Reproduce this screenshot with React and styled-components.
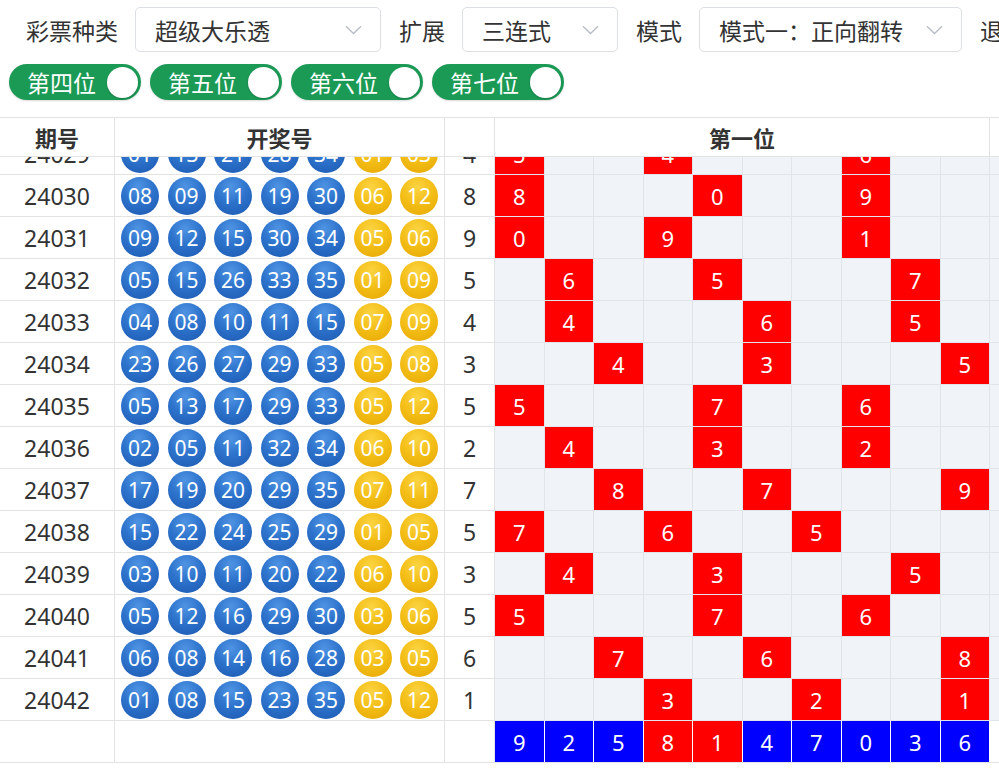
import React from 'react';
import styled, { createGlobalStyle } from 'styled-components';

const Global = createGlobalStyle`
  html, body { margin: 0; padding: 0; background: #fff; overflow: hidden; }
  body { font-family: "Noto Sans", "Noto Sans CJK SC", sans-serif; color: #333; }
  * { box-sizing: border-box; }
`;

const Page = styled.div`
  width: 1600px;
`;

const Toolbar = styled.div`
  display: flex;
  align-items: center;
  height: 45px;
  margin-top: 7px;
  padding-left: 26px;
  white-space: nowrap;
`;

const Label = styled.span`
  font-size: 23px;
  color: #333;
  margin-right: 17px;
`;

const SelectBox = styled.div`
  display: flex;
  align-items: center;
  justify-content: space-between;
  width: ${(p) => p.$w}px;
  height: 45px;
  border: 1px solid #dcdfe6;
  border-radius: 5px;
  padding: 0 18px 0 19px;
  font-size: 23px;
  color: #333;
  margin-right: 18px;
  background: #fff;
`;

const Chevron = () => (
  <svg width="17" height="10" viewBox="0 0 17 10">
    <path d="M1 1.2 L8.5 8.5 L16 1.2" fill="none" stroke="#b8bcc4" strokeWidth="1.3" />
  </svg>
);

const SwitchRow = styled.div`
  display: flex;
  gap: 9px;
  padding-left: 9px;
  margin-top: 12px;
`;

const Switch = styled.div`
  display: flex;
  align-items: center;
  justify-content: space-between;
  width: 132px;
  height: 36px;
  border-radius: 18px;
  background: #1b9a56;
  padding: 0 3px 0 18px;
  color: #fff;
  font-size: 23px;
  box-shadow: 0 1px 2px rgba(0, 0, 0, 0.15);
`;

const Knob = styled.span`
  width: 31px;
  height: 31px;
  border-radius: 50%;
  background: #fff;
  box-shadow: 0 1px 2px rgba(0, 0, 0, 0.2);
`;

const Table = styled.div`
  margin-top: 17px;
  display: flex;
  flex-direction: column;
  width: 1490px;
`;

const COLS = '115px 330px 50px 495px 495px';

const HeaderRow = styled.div`
  display: grid;
  grid-template-columns: ${COLS};
  height: 40px;
  border-top: 1px solid #e3e3e3;
  border-bottom: 1px solid #e3e3e3;
`;

const HeadCell = styled.div`
  display: flex;
  align-items: center;
  justify-content: center;
  font-size: 22px;
  font-weight: 700;
  color: #333;
  border-right: 1px solid #e3e3e3;
  background: #fff;
`;

const BodyViewport = styled.div`
  height: 564px;
  overflow: hidden;
  display: flex;
  flex-direction: column;
  justify-content: flex-end;
`;

const BodyRow = styled.div`
  flex-shrink: 0;
  display: grid;
  grid-template-columns: ${COLS};
  height: 42px;
`;

const TextCell = styled.div`
  display: flex;
  align-items: center;
  justify-content: center;
  font-size: 23px;
  color: #333;
  background: #fff;
  border-right: 1px solid #e3e3e3;
  border-bottom: 1px solid #e3e3e3;
`;

const BallCell = styled(TextCell)`
  gap: 8.5px;
`;

const Ball = styled.span`
  width: 38px;
  height: 38px;
  border-radius: 50%;
  display: flex;
  align-items: center;
  justify-content: center;
  color: #fff;
  font-size: 21px;
  background: ${(p) =>
    p.$back
      ? 'radial-gradient(circle at 45% 28%, #fbd443 0%, #f4bf18 45%, #e5a600 100%)'
      : 'radial-gradient(circle at 45% 25%, #4f94e3 0%, #2d73cc 45%, #1c58b0 100%)'};
`;

const Grid = styled.div`
  display: grid;
  grid-template-columns: repeat(10, 1fr);
`;

const GridCell = styled.div`
  display: flex;
  align-items: center;
  justify-content: center;
  font-size: 22px;
  color: #fff;
  background: ${(p) => (p.$hit ? '#ff0000' : '#f0f3f7')};
  border-right: 1px solid #e0e5eb;
  border-bottom: 1px solid #e0e5eb;
`;

const FooterRow = styled.div`
  display: grid;
  grid-template-columns: ${COLS};
  height: 42px;
  border-bottom: 1px solid #e3e3e3;
`;

const FootCell = styled.div`
  background: #fff;
  border-right: 1px solid #e3e3e3;
`;

const FootGridCell = styled.div`
  display: flex;
  align-items: center;
  justify-content: center;
  font-size: 22px;
  color: #fff;
  background: ${(p) => (p.$red ? '#ff0000' : p.$blank ? '#fff' : '#0000ff')};
  border-right: 1px solid #fff;
`;

const rows = [
  ['24029', '01 13 21 28 34', '01 03', 4, { 0: 5, 3: 4, 7: 6 }],
  ['24030', '08 09 11 19 30', '06 12', 8, { 0: 8, 4: 0, 7: 9 }],
  ['24031', '09 12 15 30 34', '05 06', 9, { 0: 0, 3: 9, 7: 1 }],
  ['24032', '05 15 26 33 35', '01 09', 5, { 1: 6, 4: 5, 8: 7 }],
  ['24033', '04 08 10 11 15', '07 09', 4, { 1: 4, 5: 6, 8: 5 }],
  ['24034', '23 26 27 29 33', '05 08', 3, { 2: 4, 5: 3, 9: 5 }],
  ['24035', '05 13 17 29 33', '05 12', 5, { 0: 5, 4: 7, 7: 6 }],
  ['24036', '02 05 11 32 34', '06 10', 2, { 1: 4, 4: 3, 7: 2 }],
  ['24037', '17 19 20 29 35', '07 11', 7, { 2: 8, 5: 7, 9: 9 }],
  ['24038', '15 22 24 25 29', '01 05', 5, { 0: 7, 3: 6, 6: 5 }],
  ['24039', '03 10 11 20 22', '06 10', 3, { 1: 4, 4: 3, 8: 5 }],
  ['24040', '05 12 16 29 30', '03 06', 5, { 0: 5, 4: 7, 7: 6 }],
  ['24041', '06 08 14 16 28', '03 05', 6, { 2: 7, 5: 6, 9: 8 }],
  ['24042', '01 08 15 23 35', '05 12', 1, { 3: 3, 6: 2, 9: 1 }],
];

const footer = [9, 2, 5, 8, 1, 4, 7, 0, 3, 6];
const footerRed = [3, 4];
const ten = Array.from({ length: 10 }, (_, i) => i);

export default function App() {
  return (
    <Page>
      <Global />
      <Toolbar>
        <Label>彩票种类</Label>
        <SelectBox $w={246}>
          <span>超级大乐透</span>
          <Chevron />
        </SelectBox>
        <Label>扩展</Label>
        <SelectBox $w={156}>
          <span>三连式</span>
          <Chevron />
        </SelectBox>
        <Label>模式</Label>
        <SelectBox $w={263}>
          <span>模式一：正向翻转</span>
          <Chevron />
        </SelectBox>
        <Label>退出</Label>
      </Toolbar>

      <SwitchRow>
        {['第四位', '第五位', '第六位', '第七位'].map((t) => (
          <Switch key={t}>
            <span>{t}</span>
            <Knob />
          </Switch>
        ))}
      </SwitchRow>

      <Table>
        <HeaderRow>
          <HeadCell>期号</HeadCell>
          <HeadCell>开奖号</HeadCell>
          <HeadCell />
          <HeadCell>第一位</HeadCell>
          <HeadCell>第二位</HeadCell>
        </HeaderRow>

        <BodyViewport>
          {rows.map(([issue, front, back, sum, hits]) => (
            <BodyRow key={issue}>
              <TextCell>{issue}</TextCell>
              <BallCell>
                {front.split(' ').map((n, i) => (
                  <Ball key={'f' + i}>{n}</Ball>
                ))}
                {back.split(' ').map((n, i) => (
                  <Ball key={'b' + i} $back>
                    {n}
                  </Ball>
                ))}
              </BallCell>
              <TextCell>{sum}</TextCell>
              <Grid>
                {ten.map((i) => (
                  <GridCell key={i} $hit={hits[i] !== undefined}>
                    {hits[i] !== undefined ? hits[i] : ''}
                  </GridCell>
                ))}
              </Grid>
              <Grid>
                {ten.map((i) => (
                  <GridCell key={i} />
                ))}
              </Grid>
            </BodyRow>
          ))}
        </BodyViewport>

        <FooterRow>
          <FootCell />
          <FootCell />
          <FootCell />
          <Grid>
            {footer.map((v, i) => (
              <FootGridCell key={i} $red={footerRed.includes(i)}>
                {v}
              </FootGridCell>
            ))}
          </Grid>
          <Grid>
            {ten.map((i) => (
              <FootGridCell key={i} $blank />
            ))}
          </Grid>
        </FooterRow>
      </Table>
    </Page>
  );
}
